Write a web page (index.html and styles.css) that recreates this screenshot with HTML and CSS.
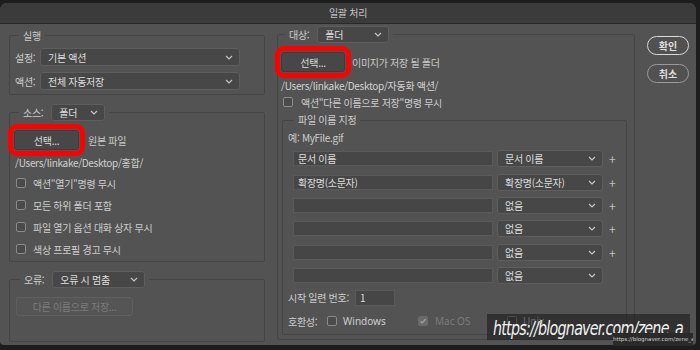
FILE: index.html
```html
<!DOCTYPE html>
<html lang="ko">
<head>
  <meta charset="UTF-8" />
  <title>일괄 처리</title>
  <link rel="stylesheet" href="styles.css">
</head>
<body>
  <div class="window">
    <div class="titlebar">일괄 처리</div>
    <div class="content">
      <div class="col-left">
        <fieldset class="group run">
          <legend>실행</legend>
          <div class="field-row">
            <span class="label">설정:</span>
            <div class="select w200">기본 액션<svg class="chev" width="8" height="5" viewBox="0 0 8 5"><path d="M1 1l3 3 3-3"/></svg></div>
          </div>
          <div class="field-row">
            <span class="label">액션:</span>
            <div class="select w200">전체 자동저장<svg class="chev" width="8" height="5" viewBox="0 0 8 5"><path d="M1 1l3 3 3-3"/></svg></div>
          </div>
        </fieldset>

        <fieldset class="group source">
          <legend>
            <div class="legend-row">
              <span>소스:</span>
              <div class="select w54">폴더<svg class="chev" width="8" height="5" viewBox="0 0 8 5"><path d="M1 1l3 3 3-3"/></svg></div>
            </div>
          </legend>
          <div class="choose-row">
            <button class="btn marked">선택...</button>
            <span class="hint">원본 파일</span>
          </div>
          <div class="path">/Users/linkake/Desktop/홍합/</div>
          <div class="check"><span class="box"></span>액션"열기"명령 무시</div>
          <div class="check"><span class="box"></span>모든 하위 폴더 포함</div>
          <div class="check"><span class="box"></span>파일 열기 옵션 대화 상자 무시</div>
          <div class="check"><span class="box"></span>색상 프로필 경고 무시</div>
        </fieldset>

        <fieldset class="group error">
          <legend>
            <div class="legend-row">
              <span>오류:</span>
              <div class="select w93">오류 시 멈춤<svg class="chev" width="8" height="5" viewBox="0 0 8 5"><path d="M1 1l3 3 3-3"/></svg></div>
            </div>
          </legend>
          <button class="btn disabled">다른 이름으로 저장...</button>
        </fieldset>
      </div>

      <fieldset class="group dest">
        <legend>
          <div class="legend-row">
            <span>대상:</span>
            <div class="select w72">폴더<svg class="chev" width="8" height="5" viewBox="0 0 8 5"><path d="M1 1l3 3 3-3"/></svg></div>
          </div>
        </legend>
        <div class="choose-row">
          <button class="btn marked">선택...</button>
          <span class="hint">이미지가 저장 될 폴더</span>
        </div>
        <div class="path">/Users/linkake/Desktop/자동화 액션/</div>
        <div class="check small"><span class="box"></span>액션"다른 이름으로 저장"명령 무시</div>

        <fieldset class="group naming">
          <legend>파일 이름 지정</legend>
          <div class="example">예: MyFile.gif</div>
          <div class="name-rows">
            <div class="name-row">
              <div class="text-input">문서 이름</div>
              <div class="select w106">문서 이름<svg class="chev" width="8" height="5" viewBox="0 0 8 5"><path d="M1 1l3 3 3-3"/></svg></div>
              <span class="plus">+</span>
            </div>
            <div class="name-row">
              <div class="text-input">확장명(소문자)</div>
              <div class="select w106">확장명(소문자)<svg class="chev" width="8" height="5" viewBox="0 0 8 5"><path d="M1 1l3 3 3-3"/></svg></div>
              <span class="plus">+</span>
            </div>
            <div class="name-row">
              <div class="text-input"></div>
              <div class="select w106">없음<svg class="chev" width="8" height="5" viewBox="0 0 8 5"><path d="M1 1l3 3 3-3"/></svg></div>
              <span class="plus">+</span>
            </div>
            <div class="name-row">
              <div class="text-input"></div>
              <div class="select w106">없음<svg class="chev" width="8" height="5" viewBox="0 0 8 5"><path d="M1 1l3 3 3-3"/></svg></div>
              <span class="plus">+</span>
            </div>
            <div class="name-row">
              <div class="text-input"></div>
              <div class="select w106">없음<svg class="chev" width="8" height="5" viewBox="0 0 8 5"><path d="M1 1l3 3 3-3"/></svg></div>
              <span class="plus">+</span>
            </div>
            <div class="name-row">
              <div class="text-input"></div>
              <div class="select w106">없음<svg class="chev" width="8" height="5" viewBox="0 0 8 5"><path d="M1 1l3 3 3-3"/></svg></div>
            </div>
          </div>
          <div class="serial-row">
            <span class="serial-label">시작 일련 번호:</span>
            <div class="text-input serial">1</div>
          </div>
          <div class="compat-row">
            <span class="compat-label">호환성:</span>
            <div class="compat-item win"><span class="box"></span>Windows</div>
            <div class="compat-item mac off">
              <span class="box checked"><svg width="8" height="8" viewBox="0 0 8 8"><path d="M1.5 4.2l1.8 1.8 3.3-4"/></svg></span>Mac OS
            </div>
            <div class="compat-item"><span class="box"></span>Unix</div>
          </div>
        </fieldset>
      </fieldset>

      <div class="actions">
        <button class="pill primary">확인</button>
        <button class="pill">취소</button>
      </div>
    </div>
  </div>

  <div class="watermark"><span class="wm-text">https://blognaver.com/zene_a</span></div>
  <div class="watermark-small">https://blognaver.com/zene_a</div>
</body>
</html>
```

FILE: styles.css
```css
* {
  box-sizing: border-box;
}

body {
  margin: 0;
  height: 350px;
  overflow: hidden;
  position: relative;
  background: #1d1d1d;
  font-family: "Noto Sans CJK KR", "Noto Sans", sans-serif;
  font-size: 10px;
  letter-spacing: -0.3px;
  color: #cdcdcd;
}

.window {
  width: 696px;
  height: 342px;
  margin-top: 3px;
  background: #535353;
  border-radius: 7px 7px 4px 4px;
}

.titlebar {
  height: 21px;
  line-height: 20px;
  background: #3b3b3b;
  border-bottom: 1px solid #282828;
  border-radius: 7px 7px 0 0;
  text-align: center;
  color: #c4c4c4;
}

.content {
  display: grid;
  grid-template-columns: 256px 358px 42px;
  column-gap: 12px;
  padding-left: 9px;
}

.col-left {
  display: flex;
  flex-direction: column;
}

/* fieldsets */
.group {
  margin: 0;
  min-width: 0;
  border: 1px solid #454545;
  border-radius: 2px;
  padding: 0 0 0 5px;
}

.group legend {
  margin-left: 4px;
  padding: 0 4px;
  line-height: 17px;
}

.legend-row {
  display: flex;
  align-items: center;
  gap: 8px;
}

.run {
  margin-top: 3px;
  padding-bottom: 4px;
}

.field-row {
  display: flex;
  align-items: center;
  height: 18px;
  margin-top: 6px;
}

.run .field-row:first-of-type {
  margin-top: 4px;
}

.label {
  width: 25px;
}

.select {
  display: flex;
  align-items: center;
  justify-content: space-between;
  height: 18px;
  padding: 0 6px 0 7px;
  background: #474747;
  border: 1px solid #5e5e5e;
  border-radius: 3px;
  color: #dedede;
}

.chev {
  fill: none;
  stroke: #c4c4c4;
  stroke-width: 1.2;
}

.w200 { width: 200px; }
.w54 { width: 54px; height: 17px; }
.w93 { width: 93px; height: 17px; }
.w72 { width: 72px; height: 17px; }
.w106 { width: 106px; height: 17px; }

.source {
  margin-top: 9px;
  padding-top: 9px;
  padding-bottom: 1px;
}

.choose-row {
  display: flex;
  align-items: center;
  height: 20px;
}

.btn {
  font: inherit;
  letter-spacing: inherit;
  height: 20px;
  width: 65px;
  margin-left: -1px;
  padding: 0;
  background: #474747;
  border: 1px solid #3c3c3c;
  border-radius: 3px;
  color: #dcdcdc;
}

.btn.marked {
  outline: 5px solid #ff0000;
  outline-offset: 1px;
}

.hint {
  margin-left: 9px;
  color: #c9c9c9;
}

.path {
  margin-top: 4px;
  height: 18px;
  line-height: 18px;
  color: #d2d2d2;
}

.check {
  display: flex;
  align-items: center;
  height: 22px;
  gap: 7px;
  padding-left: 1px;
}

.box {
  display: inline-flex;
  align-items: center;
  justify-content: center;
  width: 10px;
  height: 10px;
  border: 1px solid #8a8a8a;
  border-radius: 2px;
  background: #4b4b4b;
}

.box.checked {
  background: #6a6a6a;
  border-color: #6a6a6a;
}

.box.checked svg {
  fill: none;
  stroke: #9c9c9c;
  stroke-width: 1.4;
}

.error {
  margin-top: 9px;
  padding-top: 9px;
  padding-bottom: 25px;
  padding-left: 6px;
}

.btn.disabled {
  width: 117px;
  height: 19px;
  margin-left: 0;
  background: #555555;
  border: 1px solid #5f5f5f;
  color: #7c7c7c;
}

/* right panel */
.dest {
  align-self: start;
  margin-top: 2px;
  padding: 9px 7px 4px 3px;
}

.dest .btn {
  width: 64px;
  margin-left: 0;
}

.dest .hint {
  margin-left: 7px;
}

.dest .path {
  margin-top: 6px;
  height: 16px;
  line-height: 16px;
}

.check.small {
  height: 16px;
  gap: 8px;
  padding-left: 2px;
}

.naming {
  margin-top: 2px;
  margin-left: 1px;
  padding: 0 0 5px 5px;
}

.naming legend {
  line-height: 16px;
  margin-left: 6px;
}

.example {
  margin-top: 2px;
  line-height: 16px;
}

.name-rows {
  margin-top: 1px;
}

.name-row {
  display: flex;
  align-items: center;
  height: 23.4px;
  padding-left: 5px;
}

.text-input {
  width: 200px;
  height: 15px;
  line-height: 13px;
  padding-left: 4px;
  background: #464646;
  border: 1px solid #5a5a5a;
  color: #dedede;
}

.name-row .select {
  margin-left: 4px;
}

.plus {
  margin-left: 6px;
  color: #c0c0c0;
  font-size: 12px;
}

.serial-row {
  display: flex;
  align-items: center;
  height: 17px;
  margin-top: 2px;
}

.serial-label {
  width: 67px;
  white-space: nowrap;
}

.text-input.serial {
  width: 40px;
  height: 16px;
  line-height: 14px;
}

.compat-row {
  display: flex;
  align-items: center;
  height: 16px;
  margin-top: 7px;
}

.compat-label {
  width: 39px;
}

.compat-item {
  display: flex;
  align-items: center;
  gap: 6px;
  font-family: "Noto Sans", sans-serif;
  letter-spacing: 0;
}

.compat-item.win {
  width: 91px;
}

.compat-item.mac {
  width: 89px;
  gap: 7px;
}

.compat-item.off {
  color: #7a7a7a;
}

/* OK / Cancel */
.actions {
  display: flex;
  flex-direction: column;
  gap: 9px;
  padding-top: 12px;
}

.pill {
  font: inherit;
  font-weight: bold;
  letter-spacing: 0;
  height: 19px;
  width: 42px;
  padding: 0;
  background: #515151;
  border: 1.5px solid #9a9a9a;
  border-radius: 10px;
  color: #dedede;
}

.pill.primary {
  border-color: #d9d9d9;
}

/* blog watermark laid over the screenshot */
.watermark {
  position: absolute;
  left: 487px;
  top: 314px;
  width: 203px;
  height: 26px;
  padding-left: 6px;
  background: rgba(22, 22, 22, 0.55);
  overflow: hidden;
}

.wm-text {
  display: inline-block;
  transform: scaleX(0.75);
  transform-origin: left center;
  font-family: "DejaVu Sans", sans-serif;
  font-weight: 200;
  font-style: italic;
  font-size: 19px;
  letter-spacing: -1px;
  line-height: 28px;
  color: #f2f2f2;
  white-space: nowrap;
}

.watermark-small {
  position: absolute;
  left: 613px;
  top: 333px;
  width: 80px;
  height: 13px;
  background: #2a2a2a;
  font-family: "DejaVu Sans", sans-serif;
  font-size: 5.5px;
  letter-spacing: 0;
  line-height: 13px;
  text-align: center;
  color: #cfcfcf;
  white-space: nowrap;
  overflow: hidden;
}
```
